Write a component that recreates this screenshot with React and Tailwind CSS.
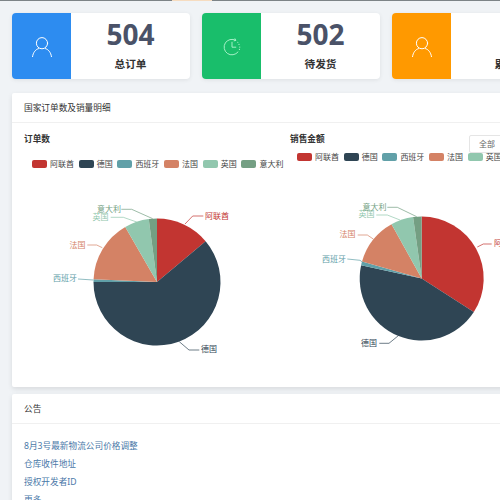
import React from "react";

const colors = ["#c23531", "#2f4554", "#61a0a8", "#d48265", "#91c7ae", "#749f83"];
const names = ["阿联酋", "德国", "西班牙", "法国", "英国", "意大利"];

const leftChart = {
  box: "24 175 266 205",
  cx: 157,
  cy: 282,
  r: 63.5,
  angles: [0, 50, 270, 272.5, 330, 352.5, 360],
  labels: [
    { x: 205, y: 216, line: "185,224 192.7,216 203.3,216" },
    { x: 201, y: 349.5, line: "179.3,341.7 189,350 199.3,350" },
    { x: 53, y: 278.5, line: "78,279 93.3,280" },
    { x: 69.5, y: 245, line: "87.3,245 96.7,245 102.3,247.7" },
    { x: 92.5, y: 216.7, line: "110.7,217.3 123.3,217.3 136.7,222" },
    { x: 97, y: 209, line: "121.3,209.3 131.7,209.3 152.7,218.7" },
  ],
};

const rightChart = {
  box: "290 175 266 205",
  cx: 421.7,
  cy: 278.5,
  r: 62,
  angles: [0, 122.8, 282.3, 285.8, 330.9, 352, 360],
  labels: [
    { x: 494, y: 243.5, line: "477.3,247 483.3,244 491.7,244" },
    { x: 361, y: 343.3, line: "379.3,343.3 389,343.3 398.3,335.7" },
    { x: 322, y: 258.7, line: "347.3,259 360,260.3 362.7,262.3" },
    { x: 339.5, y: 234.5, line: "357.7,235 367.3,235 373.3,239" },
    { x: 358.5, y: 214.5, line: "376.3,215 387.3,215 400,220" },
    { x: 362.5, y: 207.3, line: "387.3,207.3 397.3,207.3 416.7,216.7" },
  ],
};

const point = (c, deg) => {
  const a = (deg * Math.PI) / 180;
  return [c.cx + c.r * Math.sin(a), c.cy - c.r * Math.cos(a)];
};

const Pie = ({ chart }) => (
  <svg viewBox={chart.box} width="266" height="205" className="block overflow-visible">
    {colors.map((color, i) => {
      const from = point(chart, chart.angles[i]);
      const to = point(chart, chart.angles[i + 1]);
      const large = chart.angles[i + 1] - chart.angles[i] > 180 ? 1 : 0;
      return (
        <path
          key={color}
          fill={color}
          d={`M${chart.cx} ${chart.cy}L${from[0]} ${from[1]}A${chart.r} ${chart.r} 0 ${large} 1 ${to[0]} ${to[1]}Z`}
        />
      );
    })}
    {chart.labels.map((label, i) => (
      <g key={names[i]}>
        <polyline points={label.line} fill="none" stroke={colors[i]} strokeWidth="0.7" />
        <text x={label.x} y={label.y + 2.9} fill={colors[i]} fontSize="8">
          {names[i]}
        </text>
      </g>
    ))}
  </svg>
);

const Legend = ({ className }) => (
  <div className={`flex gap-[4.7px] whitespace-nowrap ${className}`}>
    {names.map((name, i) => (
      <div key={name} className="flex items-center gap-[3px] text-[8px] leading-[9px] text-[#444]">
        <span className="h-2 w-[15px] rounded-[2px]" style={{ backgroundColor: colors[i] }} />
        <span>{name}</span>
      </div>
    ))}
  </div>
);

const UserIcon = () => (
  <svg width="20" height="20" viewBox="0 0 20 20" fill="none" stroke="#fff" strokeWidth="1" strokeLinecap="round">
    <circle cx="10" cy="6.2" r="5.6" />
    <path d="M.5 19.8c.6-4.6 3.4-7.6 6-8.2M19.5 19.8c-.6-4.6-3.4-7.6-6-8.2" />
  </svg>
);

const ClockIcon = () => (
  <svg width="18" height="18" viewBox="0 0 18 18" fill="none" stroke="#b4f5d0" strokeWidth="0.9" strokeLinecap="round">
    <path d="M12.6 2.2A7.8 7.8 0 1 0 15 14" />
    <path d="M9 4.2V9.2H12.8" />
    <path d="M16.8 9v.1M16.4 11.4v.1M14.8 4.2v.1M16 6.4v.1" strokeWidth="1.1" />
    <path d="M12 .8l.8 1.6-1.7.4" />
  </svg>
);

const StatCard = ({ color, icon, value, label }) => (
  <div className="flex h-[66px] w-[178px] shrink-0 overflow-hidden rounded-[4px] bg-white shadow-[0_1px_4px_rgba(0,0,0,0.08)]">
    <div className="flex w-[59px] items-center justify-center pt-[2px]" style={{ backgroundColor: color }}>
      {icon}
    </div>
    <div className="flex flex-1 flex-col items-center">
      <div className="mt-[3px] h-[36px] text-[28px] leading-[36px] font-bold text-[#4a5268]">{value}</div>
      <div className="mt-[5px] text-[10.67px] leading-[14px] font-semibold text-[#333]">{label}</div>
    </div>
  </div>
);

export default function App() {
  return (
    <div className="h-[500px] w-[500px] overflow-hidden bg-[#f0f3f6] font-['Noto_Sans','Noto_Sans_CJK_SC',sans-serif]">
      <div className="flex h-px">
        <div className="w-[172px] bg-[#7d8487]" />
        <div className="w-[40px] bg-[#f6dcc0]" />
        <div className="flex-1 bg-[#7d8487]" />
      </div>
      <div className="flex gap-3 px-3 pt-3">
        <StatCard color="#2d8cf0" icon={<UserIcon />} value="504" label="总订单" />
        <StatCard color="#19be6b" icon={<ClockIcon />} value="502" label="待发货" />
        <StatCard color="#ff9900" icon={<UserIcon />} value="" label="累计单" />
      </div>

      <div className="mt-[14px] ml-3 h-[294px] w-[900px] rounded-[2px] bg-white shadow-[0_2px_5px_rgba(0,0,0,0.1)]">
        <div className="flex h-[30px] items-center border-b border-[#f0f0f0] px-3 pt-[2px] text-[8.67px] text-[#333]">
          国家订单数及销量明细
        </div>
        <div className="flex pt-[10px] pl-3">
          <div className="w-[266px]">
            <div className="text-[8.67px] leading-[12px] font-semibold text-[#333]">订单数</div>
            <Legend className="mt-[14px] pl-2" />
            <div className="pt-[7px]">
              <Pie chart={leftChart} />
            </div>
          </div>
          <div className="relative w-[266px]">
            <div className="text-[8.67px] leading-[12px] font-semibold text-[#333]">销售金额</div>
            <Legend className="mt-[7px] pl-[7px]" />
            <div className="pt-[14px]">
              <Pie chart={rightChart} />
            </div>
            <div className="absolute top-[2px] left-[179px] flex h-[18px] w-[60px] items-center rounded-[2px] border border-[#e5e5e5] bg-white pl-[9px] text-[8px] text-[#666]">
              全部
            </div>
          </div>
        </div>
      </div>

      <div className="mt-[7px] ml-3 h-[200px] w-[900px] rounded-[2px] bg-white shadow-[0_2px_5px_rgba(0,0,0,0.1)]">
        <div className="flex h-[30px] items-center border-b border-[#f0f0f0] px-3 pt-[2px] text-[8.67px] text-[#333]">公告</div>
        <div className="flex flex-col px-3 pt-[13px] text-[8.67px] leading-[18px] text-[#4a78a8]">
          <a>8月3号最新物流公司价格调整</a>
          <a>仓库收件地址</a>
          <a>授权开发者ID</a>
          <a>更多</a>
        </div>
      </div>
    </div>
  );
}
